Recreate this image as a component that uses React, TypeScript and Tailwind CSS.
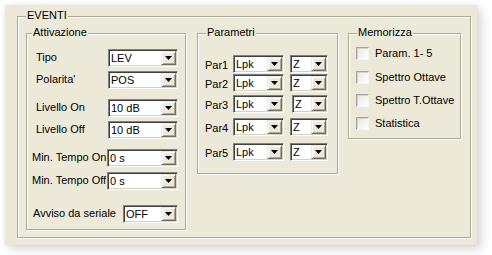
import React from "react";

// Classic sunken combo box with a beige drop button
function Combo({ value, className = "" }: { value: string; className?: string }) {
  return (
    <div
      className={`flex shrink-0 bg-white p-[1px] border border-t-[#808080] border-l-[#808080] border-r-white border-b-white shadow-[inset_1px_1px_0_#404040,inset_-1px_-1px_0_#d4d0c8] ${className}`}
    >
      <span className="flex-1 overflow-hidden whitespace-nowrap pl-[1px] text-[11px] leading-[14px]">
        {value}
      </span>
      <span className="flex w-[15px] items-center justify-center bg-[#ece9d8] border border-t-[#ece9d8] border-l-[#ece9d8] border-r-[#716f64] border-b-[#716f64] shadow-[inset_1px_1px_0_#fff,inset_-1px_-1px_0_#aca899]">
        <svg width="7" height="4" viewBox="0 0 7 4">
          <polygon points="0,0 7,0 3.5,4" fill="#000" />
        </svg>
      </span>
    </div>
  );
}

function Group({
  legend,
  className = "",
  legendClass = "left-[8px]",
  children,
}: {
  legend: string;
  className?: string;
  legendClass?: string;
  children?: React.ReactNode;
}) {
  return (
    <div
      className={`relative shrink-0 border border-[#aca899] shadow-[inset_1px_1px_0_#fff,1px_1px_0_#fff] ${className}`}
    >
      <span
        className={`absolute top-[-8px] bg-[#ece9d8] px-[1px] text-[11px] leading-[13px] ${legendClass}`}
      >
        {legend}
      </span>
      {children}
    </div>
  );
}

function Check({ label, className = "" }: { label: string; className?: string }) {
  return (
    <div className={`flex items-center gap-[6px] ${className}`}>
      <span className="h-[13px] w-[13px] shrink-0 border border-t-[#a3a39a] border-l-[#a3a39a] border-r-[#f6f6f2] border-b-[#f6f6f2] bg-gradient-to-br from-[#e8e7e0] to-white shadow-[inset_1px_1px_0_#d6d5cd]" />
      <span className="text-[11px] leading-[13px]">{label}</span>
    </div>
  );
}

const params = [
  { n: "Par1", row: "mt-[21px]", z: "ml-[6px] w-[38px]" },
  { n: "Par2", row: "mt-[1px]", z: "ml-[6px] w-[38px]" },
  { n: "Par3", row: "mt-[3px]", z: "ml-[8px] w-[36px]" },
  { n: "Par4", row: "mt-[5px]", z: "ml-[6px] w-[38px]" },
  { n: "Par5", row: "mt-[7px]", z: "ml-[6px] w-[38px]" },
];

export default function App() {
  return (
    <div className="h-[255px] w-[492px] bg-white pl-[5px] pt-[5px] font-['Liberation_Sans',Arial,sans-serif] text-black">
      <div className="h-[240px] w-[472px] bg-[#ece9d8] pl-[12px] pt-[11px] shadow-[4px_4px_10px_rgba(0,0,0,0.16),0_0_3px_rgba(0,0,0,0.08)]">
        <Group legend="EVENTI" className="h-[222px] w-[454px]">
          <div className="flex items-start pl-[8px] pt-[16px]">
            {/* Attivazione */}
            <Group legend="Attivazione" legendClass="left-[5px]" className="h-[197px] w-[160px]">
              <div className="mt-[14px] flex h-[19px] items-center pl-[9px]">
                <span className="w-[72px] text-[11px]">Tipo</span>
                <Combo value="LEV" className="w-[70px]" />
              </div>
              <div className="mt-[3px] flex h-[19px] items-center pl-[9px]">
                <span className="w-[72px] text-[11px]">Polarita'</span>
                <Combo value="POS" className="w-[70px]" />
              </div>
              <div className="mt-[9px] flex h-[19px] items-center pl-[9px]">
                <span className="w-[72px] text-[11px]">Livello On</span>
                <Combo value="10 dB" className="w-[70px]" />
              </div>
              <div className="mt-[3px] flex h-[19px] items-center pl-[9px]">
                <span className="w-[72px] text-[11px]">Livello Off</span>
                <Combo value="10 dB" className="w-[70px]" />
              </div>
              <div className="mt-[9px] flex h-[19px] items-center pl-[5px]">
                <span className="w-[75px] whitespace-nowrap text-[11px]">Min. Tempo On</span>
                <Combo value="0 s" className="w-[71px]" />
              </div>
              <div className="mt-[4px] flex h-[19px] items-center pl-[5px]">
                <span className="w-[75px] whitespace-nowrap text-[11px]">Min. Tempo Off</span>
                <Combo value="0 s" className="w-[71px]" />
              </div>
              <div className="mt-[14px] flex h-[19px] items-center pl-[6px]">
                <span className="w-[90px] whitespace-nowrap text-[11px]">Avviso da seriale</span>
                <Combo value="OFF" className="w-[55px]" />
              </div>
            </Group>

            {/* Parametri */}
            <Group legend="Parametri" className="ml-[11px] h-[141px] w-[141px]">
              {params.map((p) => (
                <div key={p.n} className={`flex h-[18px] items-center pl-[7px] ${p.row}`}>
                  <span className="w-[28px] pt-[2px] text-[11px]">{p.n}</span>
                  <Combo value="Lpk" className="w-[51px]" />
                  <Combo value="Z" className={p.z} />
                </div>
              ))}
            </Group>

            {/* Memorizza */}
            <Group legend="Memorizza" className="ml-[10px] h-[106px] w-[113px]">
              <div className="pl-[7px]">
                <Check label="Param. 1- 5" className="mt-[13px]" />
                <Check label="Spettro Ottave" className="mt-[11px]" />
                <Check label="Spettro T.Ottave" className="mt-[10px]" />
                <Check label="Statistica" className="mt-[10px]" />
              </div>
            </Group>
          </div>
        </Group>
      </div>
    </div>
  );
}
